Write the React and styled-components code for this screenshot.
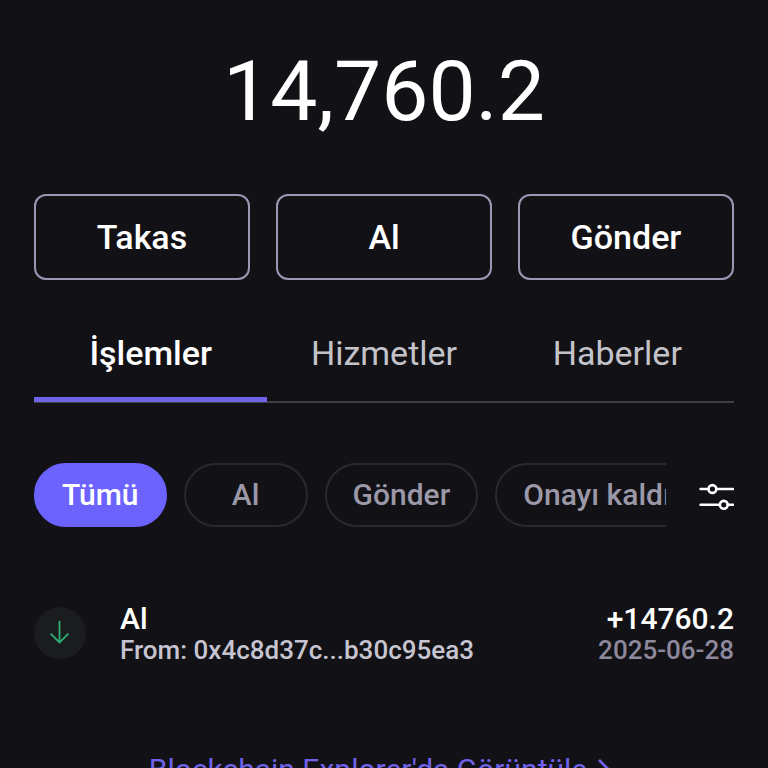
import React, { useState } from 'react';
import styled, { createGlobalStyle } from 'styled-components';

const actions = ['Takas', 'Al', 'Gönder'];
const tabs = ['İşlemler', 'Hizmetler', 'Haberler'];
const filters = ['Tümü', 'Al', 'Gönder', 'Onayı kaldır'];

export default function App() {
  const [tab, setTab] = useState(tabs[0]);
  const [filter, setFilter] = useState(filters[0]);

  return (
    <Page>
      <GlobalStyle/>
      <Balance>14,760.2</Balance>
      <Actions>
        {actions.map(name => <ActionButton type="button" key={name}>{name}</ActionButton>)}
      </Actions>
      <Tabs role="tablist">
        {tabs.map(name => (
          <Tab
            type="button"
            role="tab"
            key={name}
            aria-selected={name === tab}
            $active={name === tab}
            onClick={() => setTab(name)}
          >
            {name}
          </Tab>
        ))}
      </Tabs>
      <FilterBar>
        <Chips>
          {filters.map(name => (
            <Chip
              type="button"
              key={name}
              aria-pressed={name === filter}
              $active={name === filter}
              onClick={() => setFilter(name)}
            >
              {name}
            </Chip>
          ))}
        </Chips>
        <IconButton type="button" aria-label="Filtrele">
          <SlidersIcon/>
        </IconButton>
      </FilterBar>
      <Transaction>
        <Badge>
          <ArrowIcon/>
        </Badge>
        <Details>
          <Title>Al</Title>
          <Address>From: 0x4c8d37c...b30c95ea3</Address>
        </Details>
        <Summary>
          <Title>+14760.2</Title>
          <DateText>2025-06-28</DateText>
        </Summary>
      </Transaction>
      <ExplorerLink href="#explorer">
        Blockchain Explorer'da Görüntüle
        <ChevronIcon/>
      </ExplorerLink>
    </Page>
  );
}

const SlidersIcon = () => (
  <svg width="36" height="28" viewBox="0 0 36 28" fill="none" stroke="#fff" strokeWidth="2.6">
    <path d="M2.6 6H10.4M18.4 6H35M2.6 21.8H21.6M29.6 21.8H35" strokeLinecap="round"/>
    <circle cx="14.4" cy="6" r="3.9"/>
    <circle cx="25.8" cy="21.8" r="3.9"/>
  </svg>
);

const ArrowIcon = () => (
  <svg width="20" height="24" viewBox="0 0 20 24" fill="none" stroke="#2fae73" strokeWidth="1.8">
    <path d="M9.5 0V21.5M0.6 12.6L9.5 21.5L18.4 12.6"/>
  </svg>
);

const ChevronIcon = () => (
  <svg width="14" height="22" viewBox="0 0 14 22" fill="none" stroke="#6f61e8" strokeWidth="2.8">
    <path d="M2 1L12 11L2 21"/>
  </svg>
);

const GlobalStyle = createGlobalStyle`
  * {
    box-sizing: border-box;
  }

  body {
    margin: 0;
    background: #121116;
    font-family: Roboto, "Liberation Sans", sans-serif;
  }

  button {
    padding: 0;
    background: none;
    border: none;
    font-family: inherit;
    cursor: pointer;
  }

  svg {
    display: block;
    flex: none;
  }
`;

const Page = styled.main`
  display: flex;
  flex-direction: column;
  height: 100vh;
  padding: 42px 34px 0;
  overflow: hidden;
  color: #fff;

  > * {
    flex-shrink: 0;
  }
`;

const Balance = styled.h1`
  margin: 0;
  font-size: 84px;
  font-weight: 400;
  line-height: 100px;
  text-align: center;
`;

const Actions = styled.div`
  display: grid;
  grid-template-columns: repeat(3, 1fr);
  gap: 26px;
  margin-top: 52px;
`;

const ActionButton = styled.button`
  height: 86px;
  border: 2px solid #9c98b3;
  border-radius: 12px;
  color: #fff;
  font-size: 34px;
  font-weight: 500;
`;

const Tabs = styled.div`
  display: grid;
  grid-template-columns: repeat(3, 1fr);
  margin-top: 24px;
  padding-bottom: 1px;
  box-shadow: inset 0 -2px #403f44;
`;

const Tab = styled.button`
  height: 98px;
  padding-top: 4px;
  border-bottom: 5px solid ${props => props.$active ? '#6f63e8' : 'transparent'};
  color: ${props => props.$active ? '#fff' : '#c4c3ca'};
  font-size: 34px;
  font-weight: ${props => props.$active ? 500 : 400};
`;

const FilterBar = styled.div`
  display: flex;
  align-items: center;
  gap: 32px;
  margin-top: 60px;
`;

const Chips = styled.div`
  display: flex;
  flex: 1;
  gap: 17px;
  min-width: 0;
  overflow: hidden;
`;

const Chip = styled.button`
  flex: none;
  height: 64px;
  min-width: 124px;
  padding: 0 26px 1px;
  background: ${props => props.$active ? '#6c63ff' : 'transparent'};
  border: 2px solid ${props => props.$active ? '#6c63ff' : '#2a292e'};
  border-radius: 32px;
  color: ${props => props.$active ? '#fff' : '#9b98a8'};
  font-size: 30px;
  font-weight: 500;
  white-space: nowrap;
`;

const IconButton = styled.button`
  padding-top: 4px;
`;

const Transaction = styled.article`
  display: flex;
  align-items: center;
  margin-top: 75px;
`;

const Badge = styled.span`
  display: flex;
  align-items: center;
  justify-content: center;
  width: 52px;
  height: 52px;
  margin-right: 34px;
  background: #1b1c1e;
  border-radius: 50%;
`;

const Details = styled.div`
  flex: 1;
`;

const Summary = styled.div`
  text-align: right;
`;

const Title = styled.p`
  margin: 0;
  font-size: 30px;
  font-weight: 500;
  line-height: 34px;
`;

const Address = styled.p`
  margin: 0;
  color: #c6c4d0;
  font-size: 26px;
  font-weight: 500;
  line-height: 28px;
`;

const DateText = styled(Address)`
  color: #8d899d;
`;

const ExplorerLink = styled.a`
  display: flex;
  align-items: center;
  justify-content: center;
  gap: 10px;
  margin-top: 88px;
  padding-right: 8px;
  color: #6f61e8;
  font-size: 30px;
  line-height: 36px;
  text-decoration: none;
`;
